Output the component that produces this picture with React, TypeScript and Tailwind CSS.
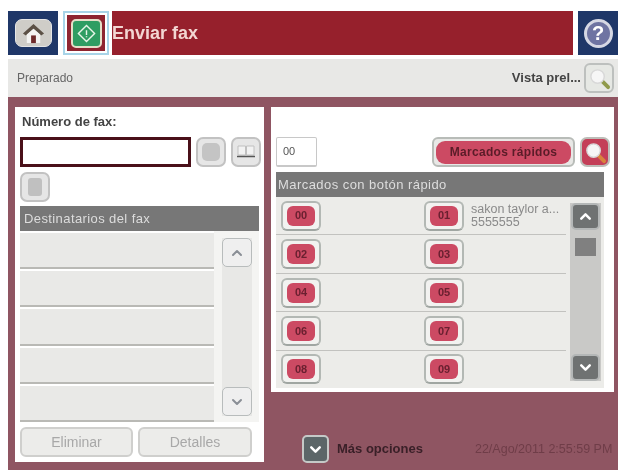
import { ChevronUp, ChevronDown } from "lucide-react";

const keys = [
  ["00", "01"],
  ["02", "03"],
  ["04", "05"],
  ["06", "07"],
  ["08", "09"],
];

function KeyButton({ label }: { label: string }) {
  return (
    <div className="w-[40px] h-[30px] rounded-[6px] bg-[#f2f2f0] border-2 border-[#b3b8b4] border-b-[#a0a6a2] flex items-center justify-center">
      <div className="w-[28px] h-[20px] rounded-[6px] bg-[#cc4a63] flex items-center justify-center text-[11px] font-bold text-[#6a2030]">
        {label}
      </div>
    </div>
  );
}

function GrayIconButton({ children }: { children?: React.ReactNode }) {
  return (
    <div className="w-[30px] h-[30px] shrink-0 rounded-[7px] bg-[#e6e6e6] border-2 border-[#c2c2c2] flex items-center justify-center">
      {children}
    </div>
  );
}

function ScrollArrow({ dir }: { dir: "up" | "down" }) {
  const Icon = dir === "up" ? ChevronUp : ChevronDown;
  return (
    <div className="w-[30px] h-[29px] rounded-[5px] bg-[#efefef] border border-[#b8bcbc] flex items-center justify-center">
      <Icon className="w-[16px] h-[16px] text-[#8a8f96]" strokeWidth={3} />
    </div>
  );
}

function DarkArrow({ dir }: { dir: "up" | "down" }) {
  const Icon = dir === "up" ? ChevronUp : ChevronDown;
  return (
    <div className="w-[29px] h-[27px] rounded-[5px] bg-[#6f7272] border-2 border-[#b4b7b7] flex items-center justify-center">
      <Icon className="w-[17px] h-[17px] text-white" strokeWidth={3.5} />
    </div>
  );
}

function Magnifier({ handle }: { handle: string }) {
  return (
    <svg viewBox="0 0 24 24" className="w-[23px] h-[23px]">
      <path d="M15 15 21 21" stroke={handle} strokeWidth="4" strokeLinecap="round" />
      <circle cx="10" cy="10" r="7" fill="#f6f6f6" stroke="#d8d8d8" strokeWidth="1.5" />
    </svg>
  );
}

export default function App() {
  return (
    <div className="w-[618px] h-[470px] bg-white pt-[11px] pl-[8px] overflow-hidden blur-[0.5px] font-['Liberation_Sans',Arial,sans-serif]">
      {/* top bar */}
      <div className="flex h-[44px]">
        <div className="w-[50px] bg-[#1f3768] flex items-center justify-center">
          <div className="w-[37px] h-[28px] rounded-[7px] bg-[#cfcdc8] border border-[#e6e6e6] flex items-center justify-center">
            <svg viewBox="0 0 24 24" className="w-[23px] h-[23px]">
              <path d="M12 2 23 12 20 14 12 7 4 14 1 12Z" fill="#5c5146" />
              <path d="M5 13 12 7 19 13V22H5Z" fill="#f4f4f2" />
              <path d="M9.5 14h5v8h-5Z" fill="#6e2a2a" />
            </svg>
          </div>
        </div>
        <div className="ml-[5px] w-[46px] border-2 border-[#a8d4e8] bg-white p-[2px]">
          <div className="w-full h-full bg-[#8e2430] flex items-center justify-center">
            <div className="w-[31px] h-[29px] rounded-[5px] bg-[#2f9d62] border-2 border-[#e5dfc8] flex items-center justify-center">
              <svg viewBox="0 0 20 20" className="w-[19px] h-[19px]" fill="none" stroke="#e8f5e8" strokeWidth="1.5">
                <path d="M10 1.5 18.5 10 10 18.5 1.5 10Z" />
                <path d="M10 6.5v5M10 13v1" />
              </svg>
            </div>
          </div>
        </div>
        <div className="ml-[3px] w-[461px] bg-[#96202c] flex items-center text-[18px] font-bold text-[#f3d6d2]">
          Enviar fax
        </div>
        <div className="ml-[5px] flex-1 bg-[#1f3768] flex items-center justify-center">
          <div className="w-[29px] h-[29px] rounded-full bg-[#6f74a2] border-[3px] border-[#d6d8e4] flex items-center justify-center text-[20px] font-bold text-white leading-none">
            ?
          </div>
        </div>
      </div>

      {/* status bar */}
      <div className="mt-[4px] h-[38px] bg-[#e8e8e6] flex items-center justify-between pl-[9px] pr-[4px]">
        <span className="text-[12px] text-[#666]">Preparado</span>
        <div className="flex items-center gap-[3px]">
          <span className="text-[13px] font-bold text-[#444]">Vista prel...</span>
          <div className="w-[30px] h-[30px] rounded-[6px] bg-[#e6e8e4] border-2 border-[#bdc0be] flex items-center justify-center">
            <Magnifier handle="#8f9a4a" />
          </div>
        </div>
      </div>

      {/* main area */}
      <div className="h-[373px] bg-[#8f5562] border-t-[2px] border-[#8f5562] pt-[8px] pl-[7px] pr-[4px] flex gap-[7px] items-start">
        {/* left panel */}
        <div className="w-[249px] h-[355px] bg-white pl-[5px] flex flex-col">
          <div className="h-[30px] pt-[5px] pl-[2px] text-[13px] font-bold text-[#444]">Número de fax:</div>
          <div className="flex items-center">
            <div className="w-[171px] h-[30px] shrink-0 bg-white border-[3px] border-[#4a1019]" />
            <div className="ml-[5px]">
              <GrayIconButton>
                <div className="w-[18px] h-[18px] rounded-[5px] bg-[#c4c4c4]" />
              </GrayIconButton>
            </div>
            <div className="ml-[5px]">
              <GrayIconButton>
                <svg viewBox="0 0 20 20" className="w-[20px] h-[20px]">
                  <path d="M2 4h7.5v9H2ZM10.5 4H18v9h-7.5Z" fill="#f2f2f2" stroke="#c0c0c0" />
                  <path d="M1 14.5h18" stroke="#555" strokeWidth="1.5" />
                </svg>
              </GrayIconButton>
            </div>
          </div>
          <div className="mt-[5px]">
            <GrayIconButton>
              <div className="w-[14px] h-[18px] rounded-[3px] bg-[#c0c0c0]" />
            </GrayIconButton>
          </div>
          <div className="mt-[4px] w-[239px] h-[25px] bg-[#777] flex items-center pl-[4px] text-[13px] text-[#ddd] tracking-[0.4px]">
            Destinatarios del fax
          </div>
          <div className="flex w-[239px] h-[191px] bg-[#f4f4f2]">
            <div className="w-[194px] flex flex-col">
              {[0, 1, 2, 3, 4].map((i) => (
                <div key={i} className="flex-1 bg-[#e9e9e7] border-b-2 border-b-[#b9b9b5] border-t-2 border-t-white" />
              ))}
            </div>
            <div className="ml-[8px] w-[30px] mt-[7px] mb-[6px] bg-[#e8e8e6] flex flex-col justify-between">
              <ScrollArrow dir="up" />
              <ScrollArrow dir="down" />
            </div>
          </div>
          <div className="mt-[5px] flex gap-[5px]">
            <div className="w-[113px] h-[30px] rounded-[6px] bg-[#ececea] border-2 border-[#cfcfcd] flex items-center justify-center text-[14px] text-[#a8a8a8]">
              Eliminar
            </div>
            <div className="w-[114px] h-[30px] rounded-[6px] bg-[#ececea] border-2 border-[#cfcfcd] flex items-center justify-center text-[14px] text-[#a8a8a8]">
              Detalles
            </div>
          </div>
        </div>

        {/* right column */}
        <div className="w-[343px] flex flex-col">
          <div className="h-[285px] bg-white px-[5px] pt-[30px]">
            <div className="flex items-center">
              <div className="w-[41px] h-[30px] bg-white border border-[#c8c8c8] border-b-2 rounded-[2px] flex items-center pl-[6px] text-[11px] text-[#555]">
                00
              </div>
              <div className="ml-auto w-[143px] h-[30px] rounded-[6px] bg-[#e8e8e6] border-2 border-[#b8bcb8] flex items-center justify-center">
                <div className="w-[135px] h-[23px] rounded-[9px] bg-[#cc4a63] flex items-center justify-center text-[12px] font-bold text-[#5a1c28] tracking-[0.3px]">
                  Marcados rápidos
                </div>
              </div>
              <div className="ml-[5px] mr-[-1px] w-[30px] h-[30px] rounded-[7px] bg-[#c43f58] border-2 border-[#bdbdb8] flex items-center justify-center">
                <Magnifier handle="#d8843c" />
              </div>
            </div>
            <div className="mt-[5px] w-[328px] h-[25px] bg-[#777] flex items-center pl-[2px] text-[13px] text-[#ddd] tracking-[0.45px]">
              Marcados con botón rápido
            </div>
            <div className="w-[328px] h-[191px] bg-[#ecece9] flex">
              <div className="w-[290px] flex flex-col">
                {keys.map((row, i) => (
                  <div
                    key={row[0]}
                    className={`flex-1 flex items-center pl-[5px] ${i < 4 ? "border-b border-b-[#c2c2bf]" : ""}`}
                  >
                    <KeyButton label={row[0]} />
                    <div className="ml-[103px]">
                      <KeyButton label={row[1]} />
                    </div>
                    {i === 0 && (
                      <div className="ml-[7px] text-[12.5px] leading-[13px] text-[#8a8a8a] whitespace-nowrap">
                        <div>sakon taylor a...</div>
                        <div>5555555</div>
                      </div>
                    )}
                  </div>
                ))}
              </div>
              <div className="ml-[4px] w-[31px] mt-[6px] mb-[7px] bg-[#c9c9c7] flex flex-col items-center">
                <DarkArrow dir="up" />
                <div className="mt-[8px] w-[21px] h-[18px] bg-[#808080]" />
                <div className="flex-1" />
                <DarkArrow dir="down" />
              </div>
            </div>
          </div>

          {/* bottom strip */}
          <div className="mt-[43px] flex items-center">
            <div className="ml-[31px] w-[27px] h-[28px] rounded-[5px] bg-[#5c6668] border-2 border-[#c5c9c7] flex items-center justify-center">
              <ChevronDown className="w-[17px] h-[17px] text-white" strokeWidth={3.5} />
            </div>
            <span className="ml-[8px] text-[13px] font-bold text-[#3a2028]">Más opciones</span>
            <span className="ml-[52px] text-[12.5px] text-[#6f3d48] whitespace-nowrap">22/Ago/2011 2:55:59 PM</span>
          </div>
        </div>
      </div>
    </div>
  );
}
